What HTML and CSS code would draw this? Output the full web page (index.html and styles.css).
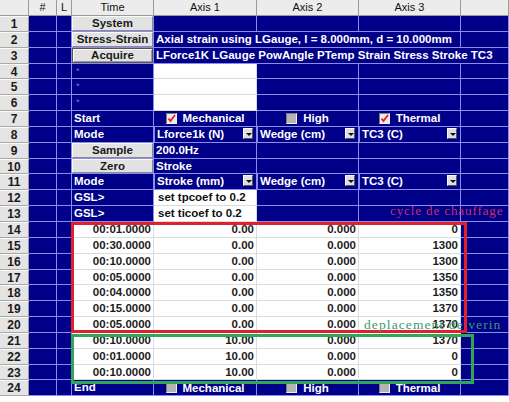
FILE: index.html
```html
<!DOCTYPE html>
<html>
<head>
    <meta charset="UTF-8">
    <title>Test Sequence</title>
    <link rel="stylesheet" href="styles.css">
</head>
<body>
    <div class="sheet">
        <div class="row"><div class="hd"></div><div class="hd">#</div><div class="hd">L</div><div class="hd">Time</div><div class="hd">Axis 1</div><div class="hd">Axis 2</div><div class="hd">Axis 3</div><div class="hd"></div></div>

        <div class="row"><div class="n">1</div><div class="b"></div><div class="b"></div><div class="b bc"><button class="btn">System</button></div><div class="b"></div><div class="b"></div><div class="b"></div><div class="b"></div></div>
        <div class="row"><div class="n">2</div><div class="b"></div><div class="b"></div><div class="b bc"><button class="btn">Stress-Strain</button></div><div class="b span3">Axial strain using LGauge, l = 8.000mm, d = 10.000mm</div><div class="b"></div></div>
        <div class="row"><div class="n">3</div><div class="b"></div><div class="b"></div><div class="b bc"><button class="btn btn-default">Acquire</button></div><div class="b span4">LForce1K LGauge PowAngle PTemp Strain Stress Stroke TC3</div></div>
        <div class="row"><div class="n">4</div><div class="b"></div><div class="b"></div><div class="b star">*</div><div class="w"></div><div class="b"></div><div class="b"></div><div class="b"></div></div>
        <div class="row"><div class="n">5</div><div class="b"></div><div class="b"></div><div class="b star">*</div><div class="w"></div><div class="b"></div><div class="b"></div><div class="b"></div></div>
        <div class="row"><div class="n">6</div><div class="b"></div><div class="b"></div><div class="b star">*</div><div class="w"></div><div class="b"></div><div class="b"></div><div class="b"></div></div>
        <div class="row"><div class="n">7</div><div class="b"></div><div class="b"></div><div class="b">Start</div>
            <div class="b chk"><span class="box on"><svg width="9" height="9" viewBox="0 0 9 9"><path d="M1.5 4.5 L3.5 7 L8 1" fill="none" stroke="#e0202a" stroke-width="1.8"/></svg></span>Mechanical</div>
            <div class="b chk"><span class="box"></span>High</div>
            <div class="b chk"><span class="box on"><svg width="9" height="9" viewBox="0 0 9 9"><path d="M1.5 4.5 L3.5 7 L8 1" fill="none" stroke="#e0202a" stroke-width="1.8"/></svg></span>Thermal</div>
            <div class="b"></div></div>
        <div class="row"><div class="n">8</div><div class="b"></div><div class="b"></div><div class="b">Mode</div>
            <div class="b sel">Lforce1k (N)<span class="arrow"></span></div>
            <div class="b sel">Wedge (cm)<span class="arrow"></span></div>
            <div class="b sel">TC3 (C)<span class="arrow"></span></div>
            <div class="b"></div></div>
        <div class="row"><div class="n">9</div><div class="b"></div><div class="b"></div><div class="b bc"><button class="btn">Sample</button></div><div class="b">200.0Hz</div><div class="b"></div><div class="b"></div><div class="b"></div></div>
        <div class="row"><div class="n">10</div><div class="b"></div><div class="b"></div><div class="b bc"><button class="btn">Zero</button></div><div class="b">Stroke</div><div class="b"></div><div class="b"></div><div class="b"></div></div>
        <div class="row"><div class="n">11</div><div class="b"></div><div class="b"></div><div class="b">Mode</div>
            <div class="b sel">Stroke (mm)<span class="arrow"></span></div>
            <div class="b sel">Wedge (cm)<span class="arrow"></span></div>
            <div class="b sel">TC3 (C)<span class="arrow"></span></div>
            <div class="b"></div></div>
        <div class="row"><div class="n">12</div><div class="b"></div><div class="b"></div><div class="b">GSL&gt;</div><div class="w cmd">set tpcoef to 0.2</div><div class="b"></div><div class="b"></div><div class="b"></div></div>
        <div class="row"><div class="n">13</div><div class="b"></div><div class="b"></div><div class="b">GSL&gt;</div><div class="w cmd">set ticoef to 0.2</div><div class="b"></div><div class="b"></div><div class="b"></div></div>

        <div class="row"><div class="n">14</div><div class="b"></div><div class="b"></div><div class="w">00:01.0000</div><div class="w">0.00</div><div class="w">0.000</div><div class="w">0</div><div class="b"></div></div>
        <div class="row"><div class="n">15</div><div class="b"></div><div class="b"></div><div class="w">00:30.0000</div><div class="w">0.00</div><div class="w">0.000</div><div class="w">1300</div><div class="b"></div></div>
        <div class="row"><div class="n">16</div><div class="b"></div><div class="b"></div><div class="w">00:10.0000</div><div class="w">0.00</div><div class="w">0.000</div><div class="w">1300</div><div class="b"></div></div>
        <div class="row"><div class="n">17</div><div class="b"></div><div class="b"></div><div class="w">00:05.0000</div><div class="w">0.00</div><div class="w">0.000</div><div class="w">1350</div><div class="b"></div></div>
        <div class="row"><div class="n">18</div><div class="b"></div><div class="b"></div><div class="w">00:04.0000</div><div class="w">0.00</div><div class="w">0.000</div><div class="w">1350</div><div class="b"></div></div>
        <div class="row"><div class="n">19</div><div class="b"></div><div class="b"></div><div class="w">00:15.0000</div><div class="w">0.00</div><div class="w">0.000</div><div class="w">1370</div><div class="b"></div></div>
        <div class="row"><div class="n">20</div><div class="b"></div><div class="b"></div><div class="w">00:05.0000</div><div class="w">0.00</div><div class="w">0.000</div><div class="w">1370</div><div class="b"></div></div>
        <div class="row"><div class="n">21</div><div class="b"></div><div class="b"></div><div class="w">00:10.0000</div><div class="w">10.00</div><div class="w">0.000</div><div class="w">1370</div><div class="b"></div></div>
        <div class="row"><div class="n">22</div><div class="b"></div><div class="b"></div><div class="w">00:01.0000</div><div class="w">10.00</div><div class="w">0.000</div><div class="w">0</div><div class="b"></div></div>
        <div class="row"><div class="n">23</div><div class="b"></div><div class="b"></div><div class="w">00:10.0000</div><div class="w">10.00</div><div class="w">0.000</div><div class="w">0</div><div class="b"></div></div>

        <div class="row"><div class="n">24</div><div class="b"></div><div class="b"></div><div class="b">End</div>
            <div class="b chk"><span class="box"></span>Mechanical</div>
            <div class="b chk"><span class="box"></span>High</div>
            <div class="b chk"><span class="box"></span>Thermal</div>
            <div class="b"></div></div>

        <!-- annotations drawn over the grid -->
        <div class="frame frame-red"></div>
        <div class="frame frame-green"></div>
        <div class="note note-red">cycle de chauffage</div>
        <div class="note note-green">deplacement de verin</div>
    </div>
</body>
</html>
```

FILE: styles.css
```css
body { margin: 0; background: white; font-family: "Liberation Sans", Arial, sans-serif; }
.sheet {
    position: relative; display: grid; width: 509px;
    grid-template-columns: 29px 28px 15px 82px 103px 102px 102px 48px;
    grid-template-rows: 16px repeat(24, 15.85px);
    font-size: 11.5px; font-weight: bold;
}
.row { display: contents; }
.row > div { box-sizing: border-box; overflow: hidden; white-space: nowrap; line-height: 14px; }

.hd { background: #ececec; color: #111; font-weight: normal; font-size: 11px; text-align: center; border-right: 1px solid #9a9a9a; border-bottom: 1px solid #9a9a9a; }
.n { background: #e4e4e4; color: #1a1a1a; font-size: 12px; text-align: center; border-right: 1px solid #9a9a9a; border-bottom: 1px solid #a8a8a8; border-top: 1px solid #fafafa; }
.b { background: #000088; color: white; padding-left: 2px; border-right: 1px solid #8c8cf0; border-bottom: 1px solid #8c8cf0; }
.w { background: white; color: #1c1c1c; text-align: right; padding-right: 2px; border-right: 1px solid #dcdcdc; border-bottom: 1px solid #dcdcdc; }
.w.cmd { text-align: left; padding-left: 4px; color: #111; }

.span3 { grid-column: span 3; overflow: visible !important; }
.span4 { grid-column: span 4; }
.star { color: #7878c8; font-size: 9px; font-weight: normal; padding-left: 4px !important; }

.bc { padding: 0 !important; }
.btn {
    display: block; width: 100%; height: 100%; margin: 0; padding: 0;
    font: bold 11.5px "Liberation Sans", Arial, sans-serif; color: #1a1a1a;
    background: #e2e2e2; border: 1px solid; border-color: #fafafa #8a8a8a #8a8a8a #fafafa;
}
.btn-default { border: 1px solid #555; box-shadow: inset 1px 1px 0 #fafafa, inset -1px -1px 0 #999; }

.chk { display: flex; align-items: center; justify-content: center; gap: 6px; padding-left: 0 !important; }
.box {
    width: 9px; height: 9px; display: flex; align-items: center; justify-content: center;
    background: #b4b4b4; border: 1px solid; border-color: #7a7a7a #f0f0f0 #f0f0f0 #7a7a7a;
}
.box.on { background: #ececec; }

.sel { position: relative; border-left: 1px solid #8c8cf0; }
.arrow {
    position: absolute; right: 3px; top: 1px; width: 10px; height: 11px; box-sizing: border-box;
    background: #dedede; border: 1px solid; border-color: #fafafa #555 #555 #fafafa;
}
.arrow::after {
    content: ""; position: absolute; left: 2px; top: 4px;
    border-left: 3px solid transparent; border-right: 3px solid transparent; border-top: 3px solid #111;
}

.frame { position: absolute; box-sizing: border-box; border: 3px solid; pointer-events: none; }
.frame-red { left: 71px; top: 222px; width: 396px; height: 111px; border-color: #e0202c; }
.frame-green { left: 71px; top: 334px; width: 403px; height: 50px; border-color: #2fa65a; }

.note { position: absolute; font-family: "Liberation Serif", "Times New Roman", serif; font-weight: normal; white-space: nowrap; }
.note-red { left: 390px; top: 203px; font-size: 13px; letter-spacing: 0.9px; color: #c8306a; }
.note-green { left: 364px; top: 317px; font-size: 13.5px; letter-spacing: 1.1px; color: #3c9a70; }
```
